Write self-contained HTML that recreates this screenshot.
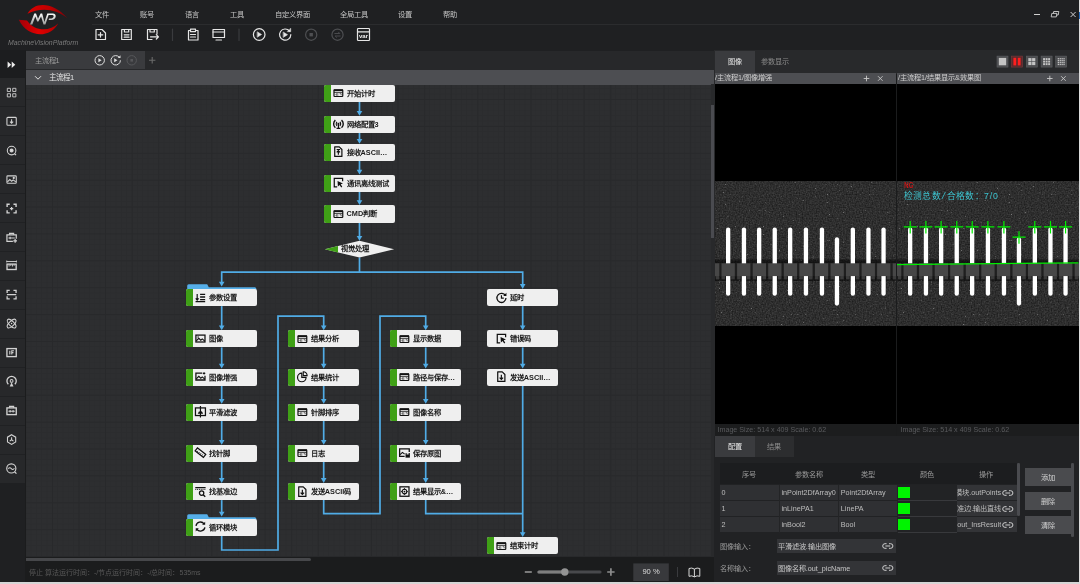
<!DOCTYPE html>
<html lang="zh-CN"><head><meta charset="utf-8"><title>MachineVisionPlatform</title>
<style>

*{box-sizing:border-box;margin:0;padding:0}
html,body{width:1080px;height:584px;overflow:hidden;background:#1f2022}
body{position:relative;font-family:"Liberation Sans", sans-serif;font-size:7.2px;color:#c8c8c8;-webkit-font-smoothing:antialiased}
#w{position:absolute;left:0;top:0;width:1080px;height:584px;overflow:hidden;will-change:transform}
.a{position:absolute}
.t{position:absolute;white-space:nowrap;line-height:10px;height:10px}
.menu{color:#c4c4c4;font-size:7.3px;top:9.5px}
svg{position:absolute;overflow:visible}
.nd{position:absolute;background:#efefef;border-radius:2px;overflow:hidden;color:#1a1a1a;font-weight:bold;font-size:7.3px;line-height:17.2px;white-space:nowrap}
.nd .g{position:absolute;left:0;top:0;bottom:0;width:7px;background:#3fa016}
.nd .ni{left:8.5px;top:3.7px;width:10.9px;height:9.1px}
.nd span{position:absolute;left:22.6px;top:0}
.cell{position:absolute;left:0;width:26px;height:29px;border-bottom:1px solid #1d1e20}
.th{position:absolute;top:466px;height:18.5px;line-height:18.5px;text-align:center;color:#9a9a9a;font-size:7.2px;width:59px}
.td{position:absolute;height:16px;line-height:15.6px;color:#bdbdbd;font-size:7.2px;white-space:nowrap;overflow:hidden;padding-left:2px}
.btn{position:absolute;left:1025.3px;width:45.9px;height:18px;background:#4a4b4e;color:#d4d4d4;text-align:center;line-height:19.6px;font-size:7.2px}

</style></head><body><div id="w">
<div class="a" style="left:0;top:0;width:1080px;height:50px;background:#1f2022"></div>
<div class="a" style="left:92px;top:23.5px;width:987px;height:1px;background:#2b2c2e"></div>
<svg style="left:0;top:0;width:92px;height:50px" viewBox="0 0 92 50">
<defs><linearGradient id="lg1" x1="0" y1="0" x2="1" y2="0"><stop offset="0" stop-color="#d80000"/><stop offset=".55" stop-color="#c00000"/><stop offset="1" stop-color="#7a0008"/></linearGradient>
<linearGradient id="lg2" x1="0" y1="0" x2="1" y2="0"><stop offset="0" stop-color="#a00008"/><stop offset=".5" stop-color="#e00000"/><stop offset="1" stop-color="#b00000"/></linearGradient>
<linearGradient id="lg3" x1="0" y1="0" x2="0" y2="1"><stop offset="0" stop-color="#fff"/><stop offset="1" stop-color="#9a9a9a"/></linearGradient></defs>
<path d="M27.5 13.8C33 2.5 52 0 67.5 18.3C55 8.2 40 7.6 27.5 13.8Z" fill="url(#lg1)"/>
<path d="M18.8 19.8C28 38.5 50.5 38.5 58.3 23.2C49.5 32 34.5 31.5 27 20.4Z" fill="url(#lg2)"/>
<path d="M30 24.6L34.3 13.5H36L38 18.8L40.6 13.5H42.2L44.4 22L47.3 13.5H52.8C57.2 13.5 56.6 20 51.2 20H48.6L49.1 18.4H51.2C54 18.4 54.4 15.1 52.4 15.1H48.6L45.4 24.6H43.5L41.1 16.4L38.4 21.5H37.2L35.3 16.6L32.3 24.6Z" fill="url(#lg3)"/>
</svg>
<div class="t" style="left:8px;top:37.5px;font-size:6.9px;font-style:italic;color:#7a7a7a">MachineVisionPlatform</div>
<div class="t menu" style="left:95px">文件</div>
<div class="t menu" style="left:140px">账号</div>
<div class="t menu" style="left:185px">语言</div>
<div class="t menu" style="left:230px">工具</div>
<div class="t menu" style="left:275px">自定义界面</div>
<div class="t menu" style="left:340px">全局工具</div>
<div class="t menu" style="left:398px">设置</div>
<div class="t menu" style="left:443px">帮助</div>
<svg style="left:1030px;top:8px;width:50px;height:13px" viewBox="1030 8 50 13" fill="none" stroke="#d0d0d0" stroke-width="1">
<path d="M1034 14.5h6"/><path d="M1051.8 13.4h5.1l-.6 3.5h-5.1z" stroke-width=".9"/><path d="M1053.4 13.4l.3-1.9h5.1l-.6 3.5h-1.5" stroke-width=".9"/><path d="M1070.6 12l5 5M1075.6 12l-5 5"/></svg>
<svg style="left:90px;top:26px;width:290px;height:18px" viewBox="90 26 290 18" fill="none" stroke="#e6e6e6" stroke-width="1.2" stroke-linejoin="round" stroke-linecap="round">
<path d="M96 29.5h6l3.5 3.5v6.5h-9.5z"/><path d="M100.5 32.5v4.6M98.2 34.8h4.6"/>
<path d="M121.7 29.5h9.6v10h-9.6z"/><path d="M124.4 29.7v2.3h4.3v-2.3M124.2 34.8h4.8M124.2 37.2h4.8"/>
<path d="M152 39.5h-4.5v-10h9.5v4.5"/><path d="M150 29.7v2.3h4.3v-2.3"/><path d="M150.5 36.8h7.8M156.3 34.6l2.2 2.2-2.2 2.2"/>
<path d="M172.5 29v11.5" stroke="#3a3b3e"/>
<path d="M190.5 30.5h-2v9.5h9.5v-9.5h-2"/><path d="M190.5 29.2h5v2.4h-5z"/><path d="M190.5 34.5h5M190.5 37h5"/>
<path d="M213 29.5h11.5v8h-11.5z"/><path d="M213 32h11.5M216 40h5.5"/>
<path d="M239 29v11.5" stroke="#3a3b3e"/>
<circle cx="259.2" cy="34.5" r="5.8"/><path d="M257.5 32l4 2.5-4 2.5z" fill="#e6e6e6" stroke-width=".6"/>
<path d="M289.5 31a5.6 5.6 0 1 0 1.3 3.7"/><path d="M290.7 28.5v3.2h-3.2z" fill="#e6e6e6" stroke-width=".5"/><path d="M283.5 32.2l4 2.5-4 2.5z" fill="#e6e6e6" stroke-width=".6"/>
<circle cx="311.2" cy="34.7" r="5.6" stroke="#4e4f52"/><rect x="309.5" y="33" width="3.4" height="3.4" fill="#4e4f52" stroke="none"/>
<circle cx="337.5" cy="34.7" r="5.6" stroke="#4e4f52"/><path d="M334.8 33.5h5l-1.3-1.3M340.2 36h-5l1.3 1.3" stroke="#4e4f52" stroke-width=".9"/>
<rect x="357.5" y="28.5" width="12" height="12" rx=".8"/><path d="M357.5 31.8h12"/>
</svg>
<div class="t" style="left:358.5px;top:32.2px;width:10px;text-align:center;font-size:6px;font-weight:bold;color:#f0f0f0;line-height:8px;height:8px">var</div>
<div class="a" style="left:0;top:78px;width:26px;height:404.5px;background:#27282a"></div>
<div class="a" style="left:0;top:50px;width:26px;height:28px;background:#1c1d1f"></div>
<svg style="left:7.4px;top:60.6px;width:9px;height:7.4px" viewBox="0 0 9 7.4"><path d="M.6 .5l3.6 3.2-3.6 3.2zM4.7 .5l3.6 3.2-3.6 3.2z" fill="#ececec"/></svg>
<div class="a" style="left:0;top:106px;width:26px;height:1px;background:#202123"></div>
<svg style="left:5.9px;top:86.9px;width:11.2px;height:11.2px" viewBox="0 0 12 12" fill="none" stroke="#d2d2d2" stroke-width="1.15"><path d="M1.4 1.4h3.4v3.4H1.4zM7.2 1.4h3.4v3.4H7.2zM1.4 7.2h3.4v3.4H1.4zM7.2 7.2h3.4v3.4H7.2z" stroke-width=".95"/></svg>
<div class="a" style="left:0;top:135px;width:26px;height:1px;background:#202123"></div>
<svg style="left:5.9px;top:115.82px;width:11.2px;height:11.2px" viewBox="0 0 12 12" fill="none" stroke="#d2d2d2" stroke-width="1.15"><rect x="1" y="1.5" width="10" height="8.5" rx="1"/><path d="M6 3.5v4M4.3 6L6 7.7 7.7 6" /></svg>
<div class="a" style="left:0;top:164px;width:26px;height:1px;background:#202123"></div>
<svg style="left:5.9px;top:144.74px;width:11.2px;height:11.2px" viewBox="0 0 12 12" fill="none" stroke="#d2d2d2" stroke-width="1.15"><circle cx="6" cy="6" r="4.6"/><circle cx="6" cy="6" r="1.6" fill="#ddd"/><path d="M9.2 9.4l1.6 1.4"/></svg>
<div class="a" style="left:0;top:193px;width:26px;height:1px;background:#202123"></div>
<svg style="left:5.9px;top:173.66px;width:11.2px;height:11.2px" viewBox="0 0 12 12" fill="none" stroke="#d2d2d2" stroke-width="1.15"><rect x="1" y="2" width="10" height="8" rx=".8"/><path d="M1.5 8.5l2.6-2.6 2 1.8 1.6-1.4 2.8 2.2"/><circle cx="8.3" cy="4.2" r=".6" fill="#ddd"/></svg>
<div class="a" style="left:0;top:222px;width:26px;height:1px;background:#202123"></div>
<svg style="left:5.9px;top:202.58px;width:11.2px;height:11.2px" viewBox="0 0 12 12" fill="none" stroke="#d2d2d2" stroke-width="1.15"><path d="M1.2 4.2V1.4h2.8M8 1.4h2.8v2.8M10.8 7.8v2.8H8M4 10.6H1.2V7.8" stroke-width="1.5"/><path d="M6 4.2v3.6M4.2 6h3.6" stroke-width="1.3"/></svg>
<div class="a" style="left:0;top:251px;width:26px;height:1px;background:#202123"></div>
<svg style="left:5.9px;top:231.5px;width:11.2px;height:11.2px" viewBox="0 0 12 12" fill="none" stroke="#d2d2d2" stroke-width="1.15"><path d="M7.4 10H1V3h10v4.2" stroke-width="1.3"/><path d="M3.8 3V1.5h4.4V3M2.6 6.5h6.8M4.4 5.2v2.6" stroke-width="1.2"/><path d="M9.8 7.6v4M7.8 9.6h4" stroke-width="1.3"/></svg>
<div class="a" style="left:0;top:280px;width:26px;height:1px;background:#202123"></div>
<svg style="left:5.9px;top:260.42px;width:11.2px;height:11.2px" viewBox="0 0 12 12" fill="none" stroke="#d2d2d2" stroke-width="1.15"><path d="M.8 1.6h10.4M.8 .6v2M11.2 .6v2" stroke-width="1"/><rect x="1.1" y="4.4" width="9.8" height="5.8" stroke-width="1.45"/><path d="M3.3 4.6v2.4M5.1 4.6v1.7M6.9 4.6v2.4M8.7 4.6v1.7" stroke-width="1"/></svg>
<div class="a" style="left:0;top:309px;width:26px;height:1px;background:#202123"></div>
<svg style="left:5.9px;top:289.34px;width:11.2px;height:11.2px" viewBox="0 0 12 12" fill="none" stroke="#d2d2d2" stroke-width="1.15"><path d="M1.2 4.2V1.5h2.8M8 1.5h2.8v2.7M10.8 7.8v2.7H8M4 10.5H1.2V7.8M1 6h10" stroke-width="1.4"/></svg>
<div class="a" style="left:0;top:338px;width:26px;height:1px;background:#202123"></div>
<svg style="left:5.9px;top:318.26px;width:11.2px;height:11.2px" viewBox="0 0 12 12" fill="none" stroke="#d2d2d2" stroke-width="1.15"><ellipse cx="6" cy="6" rx="6" ry="2.6" transform="rotate(45 6 6)" stroke-width="1.1"/><ellipse cx="6" cy="6" rx="6" ry="2.6" transform="rotate(-45 6 6)" stroke-width="1.1"/><circle cx="6" cy="6" r=".8" fill="#ddd" stroke="none"/></svg>
<div class="a" style="left:0;top:367px;width:26px;height:1px;background:#202123"></div>
<svg style="left:5.9px;top:347.18px;width:11.2px;height:11.2px" viewBox="0 0 12 12" fill="none" stroke="#d2d2d2" stroke-width="1.15"><rect x="1" y="1.7" width="10" height="8.6" stroke-width="1.45"/><path d="M4.1 4v4M6.2 8V4h2.3M6.2 6h1.8" stroke-width="1.2"/></svg>
<div class="a" style="left:0;top:396px;width:26px;height:1px;background:#202123"></div>
<svg style="left:5.9px;top:376.1px;width:11.2px;height:11.2px" viewBox="0 0 12 12" fill="none" stroke="#d2d2d2" stroke-width="1.15"><path d="M2.5 8.9a5 5 0 1 1 7 0" stroke-width="1.4"/><circle cx="6" cy="5.3" r="1.5" stroke-width="1.1"/><path d="M6 6.6l2 4.6H4z" fill="#d2d2d2" stroke="none"/></svg>
<div class="a" style="left:0;top:425px;width:26px;height:1px;background:#202123"></div>
<svg style="left:5.9px;top:405.02px;width:11.2px;height:11.2px" viewBox="0 0 12 12" fill="none" stroke="#d2d2d2" stroke-width="1.15"><rect x="1" y="3.1" width="10" height="7.2" stroke-width="1.45"/><path d="M3.8 3V1.5h4.4V3" stroke-width="1.2"/><path d="M2.6 6.7h6.8M4.4 5.3v2.8M7.6 5.3v2.8" stroke-width="1.1"/></svg>
<div class="a" style="left:0;top:454px;width:26px;height:1px;background:#202123"></div>
<svg style="left:5.9px;top:433.94px;width:11.2px;height:11.2px" viewBox="0 0 12 12" fill="none" stroke="#d2d2d2" stroke-width="1.15"><path d="M6 .8l4.4 2.6v5.2L6 11.2 1.6 8.6V3.4z"/><path d="M6 3.6v2.6l-2 1.4M6 6.2l2 1.4"/></svg>
<svg style="left:5.9px;top:462.86px;width:11.2px;height:11.2px" viewBox="0 0 12 12" fill="none" stroke="#d2d2d2" stroke-width="1.15"><circle cx="5.7" cy="5.8" r="4.9" stroke-width="1.25"/><path d="M9.2 9.4l2 2" stroke-width="1.3"/><path d="M2.4 6.2q1.6-2.2 3.3-.2t3.3-.4" stroke-width="1.1"/></svg>
<div class="a" style="left:25.2px;top:50px;width:.8px;height:532px;background:#1b1c1d"></div>
<div class="a" style="left:26px;top:50.5px;width:688px;height:19.5px;background:#27282a"></div>
<div class="a" style="left:26px;top:51px;width:119px;height:18.3px;background:#3a3b3e"></div>
<div class="t" style="left:34.5px;top:55.5px;color:#9c9c9c;font-size:7.3px">主流程1</div>
<svg style="left:90px;top:52px;width:70px;height:17px" viewBox="90 52 70 17" fill="none" stroke="#e0e0e0" stroke-width="1">
<circle cx="99.7" cy="60.3" r="4.7"/><path d="M98.4 58.3l3.2 2-3.2 2z" fill="#e0e0e0" stroke="none"/>
<path d="M119.4 57.4a4.7 4.7 0 1 0 1 2.9"/><path d="M120.5 55.3v2.7h-2.7z" fill="#e0e0e0" stroke="none"/><path d="M114.2 58.3l3.2 2-3.2 2z" fill="#e0e0e0" stroke="none"/>
<circle cx="131.7" cy="60.3" r="4.7" stroke="#56575a"/><rect x="130.4" y="59" width="2.6" height="2.6" fill="#56575a" stroke="none"/>
<path d="M149 60.3h6.4M152.2 57.1v6.4" stroke="#6a6a6a" stroke-width="1.1"/>
</svg>
<div class="a" style="left:26px;top:70px;width:688px;height:14.6px;background:#4d4e52"></div>
<svg style="left:34px;top:74.6px;width:8px;height:6px" viewBox="0 0 8 6" fill="none" stroke="#e0e0e0" stroke-width="1"><path d="M1 1.2l3 3 3-3"/></svg>
<div class="t" style="left:49px;top:72.6px;color:#e4e4e4;font-size:7.5px">主流程1</div>
<div class="a" style="left:26px;top:84.5px;width:684.5px;height:472.5px;background-color:#2d2e30;
background-image:linear-gradient(#28292b .8px,transparent .8px),linear-gradient(90deg,#28292b .8px,transparent .8px),linear-gradient(#2b2c2e .7px,transparent .7px),linear-gradient(90deg,#2b2c2e .7px,transparent .7px);
background-size:26.6px 26.9px,26.6px 26.9px,5.32px 5.38px,5.32px 5.38px;background-position:-.7px 14px,-.7px 14px,-.7px 14px,-.7px 14px"></div>
<div class="a" style="left:710.5px;top:84px;width:3.5px;height:473px;background:#28292b"></div>
<div class="a" style="left:710.5px;top:104.5px;width:3.5px;height:133.5px;background:#4a4b50"></div>
<div class="a" style="left:26px;top:557px;width:688px;height:4px;background:#1b1c1d"></div>
<div class="a" style="left:26px;top:557.7px;width:285px;height:3.1px;background:#46474a;border-radius:0 2px 2px 0"></div>
<svg style="left:0;top:0;width:1080px;height:584px" viewBox="0 0 1080 584" fill="none" stroke="#50ace6" stroke-width="1.7">
<path d="M359.5 102V112.8"/><path d="M359.5 115.8l-2.8 -4.8h5.6z" fill="#50ace6" stroke="none"/><path d="M359.5 133V140.7"/><path d="M359.5 143.7l-2.8 -4.8h5.6z" fill="#50ace6" stroke="none"/><path d="M359.5 161V171.5"/><path d="M359.5 174.5l-2.8 -4.8h5.6z" fill="#50ace6" stroke="none"/><path d="M359.5 191.7V202"/><path d="M359.5 205l-2.8 -4.8h5.6z" fill="#50ace6" stroke="none"/><path d="M359.5 222.2V237.8"/><path d="M359.5 240.8l-2.8 -4.8h5.6z" fill="#50ace6" stroke="none"/><path d="M359.5 257.5V272.2"/><path d="M221.7 283V272.2H522.7V286"/><path d="M221.7 286.6l-2.8 -4.8h5.6z" fill="#50ace6" stroke="none"/><path d="M522.7 288.9l-2.8 -4.8h5.6z" fill="#50ace6" stroke="none"/><path d="M221.7 306.1V327.2"/><path d="M221.7 330.2l-2.8 -4.8h5.6z" fill="#50ace6" stroke="none"/><path d="M221.7 347.4V365.5"/><path d="M221.7 368.5l-2.8 -4.8h5.6z" fill="#50ace6" stroke="none"/><path d="M221.7 385.7V400.8"/><path d="M221.7 403.8l-2.8 -4.8h5.6z" fill="#50ace6" stroke="none"/><path d="M221.7 421V441.8"/><path d="M221.7 444.8l-2.8 -4.8h5.6z" fill="#50ace6" stroke="none"/><path d="M221.7 462V479.9"/><path d="M221.7 482.9l-2.8 -4.8h5.6z" fill="#50ace6" stroke="none"/><path d="M221.7 500.1V513.5"/><path d="M221.7 516.5l-2.8 -4.8h5.6z" fill="#50ace6" stroke="none"/><path d="M323.7 347.4V365.5"/><path d="M323.7 368.5l-2.8 -4.8h5.6z" fill="#50ace6" stroke="none"/><path d="M323.7 385.7V400.8"/><path d="M323.7 403.8l-2.8 -4.8h5.6z" fill="#50ace6" stroke="none"/><path d="M323.7 421V441.8"/><path d="M323.7 444.8l-2.8 -4.8h5.6z" fill="#50ace6" stroke="none"/><path d="M323.7 462V479.9"/><path d="M323.7 482.9l-2.8 -4.8h5.6z" fill="#50ace6" stroke="none"/><path d="M425.7 347.4V365.5"/><path d="M425.7 368.5l-2.8 -4.8h5.6z" fill="#50ace6" stroke="none"/><path d="M425.7 385.7V400.8"/><path d="M425.7 403.8l-2.8 -4.8h5.6z" fill="#50ace6" stroke="none"/><path d="M425.7 421V441.8"/><path d="M425.7 444.8l-2.8 -4.8h5.6z" fill="#50ace6" stroke="none"/><path d="M425.7 462V479.9"/><path d="M425.7 482.9l-2.8 -4.8h5.6z" fill="#50ace6" stroke="none"/><path d="M221.7 536V550H278V316.2H323.7V327"/><path d="M323.7 330.2l-2.8 -4.8h5.6z" fill="#50ace6" stroke="none"/><path d="M323.7 500V513.7H380V316.2H425.7V327"/><path d="M425.7 330.2l-2.8 -4.8h5.6z" fill="#50ace6" stroke="none"/><path d="M425.7 500V513.7H522.7"/><path d="M522.7 306.1V327.2"/><path d="M522.7 330.2l-2.8 -4.8h5.6z" fill="#50ace6" stroke="none"/><path d="M522.7 347.4V365.5"/><path d="M522.7 368.5l-2.8 -4.8h5.6z" fill="#50ace6" stroke="none"/><path d="M522.7 385.5V534"/><path d="M522.7 537l-2.8 -4.8h5.6z" fill="#50ace6" stroke="none"/>
<path d="M324.9 249.2L359.5 240.8L394.1 249.2L359.5 257.6Z" fill="#efefef" stroke="none"/>
<path d="M324.9 249.2L338 246L338 252.4Z" fill="#3fa016" stroke="none"/>
<path d="M187.2 290v-4.2q0 -1.5 1.5 -1.5h18.5l1.6 3h46q1.5 0 1.5 1.5v1.2z" fill="#55aee8" stroke="none"/>
<path d="M187.2 520v-4.2q0 -1.5 1.5 -1.5h18.5l1.6 3h46q1.5 0 1.5 1.5v1.2z" fill="#55aee8" stroke="none"/>
</svg>
<div class="t" style="left:330.2px;top:244.2px;width:50px;text-align:center;color:#1a1a1a;font-weight:bold;font-size:7.3px">视觉处理</div>
<div class="nd" style="left:324px;top:84.8px;width:71px;height:17.2px"><i class="g"></i><svg class="ni" viewBox="0 0 12 10"><g transform="translate(0 .15)"><rect x="1.1" y="2.3" width="9.65" height="6.9" rx=".7" fill="none" stroke="#111" stroke-width="1.35"/><path d="M.8 2.2h10.3" stroke="#111" stroke-width="1.7"/><path d="M1.1 4.6h9.65" stroke="#111" stroke-width=".95"/><path d="M5.9 6.3H3.3v1.4H5.9M7.3 6.1h1.7v1.8" stroke="#222" stroke-width=".7" fill="none"/></g></svg><span>开始计时</span></div>
<div class="nd" style="left:324px;top:115.8px;width:71px;height:17.2px"><i class="g"></i><svg class="ni" viewBox="0 0 12 10"><g transform="translate(0 .6)"><path d="M2.6 .6a5.6 5.6 0 0 0 0 8.4M9.4 .6a5.6 5.6 0 0 1 0 8.4" stroke="#111" stroke-width="1.55" fill="none"/><path d="M4.5 2.6a3 3 0 0 0 0 4.4M7.5 2.6a3 3 0 0 1 0 4.4" stroke="#111" stroke-width="1.2" fill="none"/><circle cx="6" cy="4.8" r="1.2" fill="#111"/><path d="M6 5.5v3.8M3.9 9.6h4.2" stroke="#111" stroke-width="1.4" fill="none"/></g></svg><span>网络配置3</span></div>
<div class="nd" style="left:324px;top:143.7px;width:71px;height:17.2px"><i class="g"></i><svg class="ni" viewBox="0 0 12 10"><path d="M1.9 -.2h5l2.9 2.9v7.7H1.9z" fill="none" stroke="#111" stroke-width="1.35" stroke-linejoin="round"/><path d="M5.9 8.4V4.3M4.1 5.9l1.8-1.9 1.8 1.9M4 2.7h3.8" stroke="#111" stroke-width="1.25" fill="none"/></svg><span>接收ASCII…</span></div>
<div class="nd" style="left:324px;top:174.5px;width:71px;height:17.2px"><i class="g"></i><svg class="ni" viewBox="0 0 12 10"><path d="M10.6 3.6V.4H1.4v9.4h3.2" fill="none" stroke="#111" stroke-width="1.35"/><path d="M5 3.4l6 2.7-2.5.8 1.7 2.7-1.2.8-1.7-2.7-1.9 1.7z" fill="#111"/></svg><span>通讯离线测试</span></div>
<div class="nd" style="left:324px;top:205.4px;width:71px;height:17.2px"><i class="g"></i><svg class="ni" viewBox="0 0 12 10"><g transform="translate(0 .15)"><rect x="1.1" y="2.3" width="9.65" height="6.9" rx=".7" fill="none" stroke="#111" stroke-width="1.35"/><path d="M.8 2.2h10.3" stroke="#111" stroke-width="1.7"/><path d="M1.1 4.6h9.65" stroke="#111" stroke-width=".95"/><path d="M5.9 6.3H3.3v1.4H5.9M7.3 6.1h1.7v1.8" stroke="#222" stroke-width=".7" fill="none"/></g></svg><span>CMD判断</span></div>
<div class="nd" style="left:186.2px;top:288.9px;width:71px;height:17.2px"><i class="g"></i><svg class="ni" viewBox="0 0 12 10"><path d="M2.4 1v6.6M.8 6l1.6 1.8L4 6" stroke="#111" stroke-width="1.3" fill="none"/><path d="M5.6 1.6h5.6M5.6 4.4h5.6M5.6 7.2h5.6M.6 9.4h10.6" stroke="#111" stroke-width="1.4" fill="none"/></svg><span>参数设置</span></div>
<div class="nd" style="left:186.2px;top:330.2px;width:71px;height:17.2px"><i class="g"></i><svg class="ni" viewBox="0 0 12 10"><rect x="1" y="1.2" width="10" height="7.6" fill="none" stroke="#111" stroke-width="1.4"/><path d="M1.4 7.6l2.8-2.8 2.2 2 1.6-1.4 2.8 2.4" stroke="#111" stroke-width="1.3" fill="none"/><circle cx="3.4" cy="3.4" r=".8" fill="#111"/></svg><span>图像</span></div>
<div class="nd" style="left:186.2px;top:368.5px;width:71px;height:17.2px"><i class="g"></i><svg class="ni" viewBox="0 0 12 10"><path d="M8 1.2H1v7.6h10V4" fill="none" stroke="#111" stroke-width="1.4"/><path d="M1.4 7.6l2.8-2.8 2.2 2 1.6-1.4 2.8 2.4" stroke="#111" stroke-width="1.3" fill="none"/><path d="M10 .2v2.6M8.7 1.5h2.6" stroke="#111" stroke-width="1.15"/></svg><span>图像增强</span></div>
<div class="nd" style="left:186.2px;top:403.8px;width:71px;height:17.2px"><i class="g"></i><svg class="ni" viewBox="0 0 12 10"><rect x=".5" y="1" width="11" height="8.4" fill="none" stroke="#111" stroke-width="1.4"/><path d="M6 -1v12.6" stroke="#111" stroke-width="1.3"/><path d="M3 7.4l1.6-3 1.4 1.8 1.4-1.8 1.6 3z" fill="#111"/></svg><span>平滑滤波</span></div>
<div class="nd" style="left:186.2px;top:444.8px;width:71px;height:17.2px"><i class="g"></i><svg class="ni" viewBox="0 0 12 10"><g transform="rotate(38 6 5)"><rect x=".2" y="2.9" width="11.6" height="4.2" fill="none" stroke="#111" stroke-width="1.35"/><path d="M2.6 5.2v1.9M4.8 5.2v1.9M7 5.2v1.9M9.2 5.2v1.9" stroke="#111" stroke-width=".9"/></g></svg><span>找针脚</span></div>
<div class="nd" style="left:186.2px;top:482.9px;width:71px;height:17.2px"><i class="g"></i><svg class="ni" viewBox="0 0 12 10"><path d="M.3 .6h11.4" stroke="#111" stroke-width="1.3"/><path d="M.3 2.6h11.4" stroke="#111" stroke-width="1.1" stroke-dasharray="1.1 .9"/><circle cx="7.3" cy="6.7" r="2.4" fill="#efefef" stroke="#111" stroke-width="1.4"/><path d="M9 8.5l2.3 2.3" stroke="#111" stroke-width="1.5"/></svg><span>找基准边</span></div>
<div class="nd" style="left:186.2px;top:518.8px;width:71px;height:17.2px"><i class="g"></i><svg class="ni" viewBox="0 0 12 10"><path d="M1.1 4.2A5 5 0 0 1 10 2M10.9 5.8A5 5 0 0 1 2 8" fill="none" stroke="#111" stroke-width="1.5"/><path d="M11.2 -.4v3.4H7.8zM.8 10.4V7H4.2z" fill="#111"/></svg><span>循环模块</span></div>
<div class="nd" style="left:288.2px;top:330.2px;width:71px;height:17.2px"><i class="g"></i><svg class="ni" viewBox="0 0 12 10"><g transform="translate(0 .15)"><rect x="1.1" y="2.3" width="9.65" height="6.9" rx=".7" fill="none" stroke="#111" stroke-width="1.35"/><path d="M.8 2.2h10.3" stroke="#111" stroke-width="1.7"/><path d="M1.1 4.6h9.65" stroke="#111" stroke-width=".95"/><path d="M5.9 6.3H3.3v1.4H5.9M7.3 6.1h1.7v1.8" stroke="#222" stroke-width=".7" fill="none"/></g></svg><span>结果分析</span></div>
<div class="nd" style="left:288.2px;top:368.5px;width:71px;height:17.2px"><i class="g"></i><svg class="ni" viewBox="0 0 12 10"><path d="M5.3 1.3A4.7 4.7 0 1 0 10 6H5.3z" fill="none" stroke="#111" stroke-width="1.3"/><path d="M6.9 -.3a4.3 4.3 0 0 1 4.3 4.3H6.9z" fill="none" stroke="#111" stroke-width="1.2"/></svg><span>结果统计</span></div>
<div class="nd" style="left:288.2px;top:403.8px;width:71px;height:17.2px"><i class="g"></i><svg class="ni" viewBox="0 0 12 10"><g transform="translate(0 .15)"><rect x="1.1" y="2.3" width="9.65" height="6.9" rx=".7" fill="none" stroke="#111" stroke-width="1.35"/><path d="M.8 2.2h10.3" stroke="#111" stroke-width="1.7"/><path d="M1.1 4.6h9.65" stroke="#111" stroke-width=".95"/><path d="M5.9 6.3H3.3v1.4H5.9M7.3 6.1h1.7v1.8" stroke="#222" stroke-width=".7" fill="none"/></g></svg><span>针脚排序</span></div>
<div class="nd" style="left:288.2px;top:444.8px;width:71px;height:17.2px"><i class="g"></i><svg class="ni" viewBox="0 0 12 10"><g transform="translate(0 .15)"><rect x="1.1" y="2.3" width="9.65" height="6.9" rx=".7" fill="none" stroke="#111" stroke-width="1.35"/><path d="M.8 2.2h10.3" stroke="#111" stroke-width="1.7"/><path d="M1.1 4.6h9.65" stroke="#111" stroke-width=".95"/><path d="M5.9 6.3H3.3v1.4H5.9M7.3 6.1h1.7v1.8" stroke="#222" stroke-width=".7" fill="none"/></g></svg><span>日志</span></div>
<div class="nd" style="left:288.2px;top:482.9px;width:71px;height:17.2px"><i class="g"></i><svg class="ni" viewBox="0 0 12 10"><path d="M1.9 -.2h5l2.9 2.9v7.7H1.9z" fill="none" stroke="#111" stroke-width="1.35" stroke-linejoin="round"/><path d="M5.9 3v5M4 6.2l1.9 2 1.9-2" stroke="#111" stroke-width="1.3" fill="none"/></svg><span>发送ASCII码</span></div>
<div class="nd" style="left:390.2px;top:330.2px;width:71px;height:17.2px"><i class="g"></i><svg class="ni" viewBox="0 0 12 10"><g transform="translate(0 .15)"><rect x="1.1" y="2.3" width="9.65" height="6.9" rx=".7" fill="none" stroke="#111" stroke-width="1.35"/><path d="M.8 2.2h10.3" stroke="#111" stroke-width="1.7"/><path d="M1.1 4.6h9.65" stroke="#111" stroke-width=".95"/><path d="M5.9 6.3H3.3v1.4H5.9M7.3 6.1h1.7v1.8" stroke="#222" stroke-width=".7" fill="none"/></g></svg><span>显示数据</span></div>
<div class="nd" style="left:390.2px;top:368.5px;width:71px;height:17.2px"><i class="g"></i><svg class="ni" viewBox="0 0 12 10"><g transform="translate(0 .15)"><rect x="1.1" y="2.3" width="9.65" height="6.9" rx=".7" fill="none" stroke="#111" stroke-width="1.35"/><path d="M.8 2.2h10.3" stroke="#111" stroke-width="1.7"/><path d="M1.1 4.6h9.65" stroke="#111" stroke-width=".95"/><path d="M5.9 6.3H3.3v1.4H5.9M7.3 6.1h1.7v1.8" stroke="#222" stroke-width=".7" fill="none"/></g></svg><span>路径与保存…</span></div>
<div class="nd" style="left:390.2px;top:403.8px;width:71px;height:17.2px"><i class="g"></i><svg class="ni" viewBox="0 0 12 10"><g transform="translate(0 .15)"><rect x="1.1" y="2.3" width="9.65" height="6.9" rx=".7" fill="none" stroke="#111" stroke-width="1.35"/><path d="M.8 2.2h10.3" stroke="#111" stroke-width="1.7"/><path d="M1.1 4.6h9.65" stroke="#111" stroke-width=".95"/><path d="M5.9 6.3H3.3v1.4H5.9M7.3 6.1h1.7v1.8" stroke="#222" stroke-width=".7" fill="none"/></g></svg><span>图像名称</span></div>
<div class="nd" style="left:390.2px;top:444.8px;width:71px;height:17.2px"><i class="g"></i><svg class="ni" viewBox="0 0 12 10"><path d="M6.2 9.3H.7V.9h10.6V4.4" fill="none" stroke="#111" stroke-width="1.4"/><path d="M1.2 7.4l2.6-2.6 2.4 2" stroke="#111" stroke-width="1.2" fill="none"/><rect x="7.2" y="5.6" width="4.8" height="5" fill="#111"/><rect x="8.4" y="5.6" width="2.2" height="1.5" fill="#efefef"/></svg><span>保存原图</span></div>
<div class="nd" style="left:390.2px;top:482.9px;width:71px;height:17.2px"><i class="g"></i><svg class="ni" viewBox="0 0 12 10"><rect x="1" y="-.2" width="10" height="10.4" fill="none" stroke="#111" stroke-width="1.4"/><circle cx="6" cy="5" r="2.6" fill="none" stroke="#111" stroke-width="1.2"/><circle cx="6" cy="5" r="1" fill="#111"/><path d="M6 1.2v1.6M6 7.2v1.6M2.2 5h1.6M8.2 5h1.6" stroke="#111" stroke-width="1"/></svg><span>结果显示&amp;…</span></div>
<div class="nd" style="left:487.2px;top:288.9px;width:71px;height:17.2px"><svg class="ni" viewBox="0 0 12 10"><path d="M10.4 3A5 5 0 1 0 11 5.6" fill="none" stroke="#111" stroke-width="1.45"/><path d="M11.5 -.2v3.6H7.9z" fill="#111"/><path d="M6 2.6V5.6h2.6" fill="none" stroke="#111" stroke-width="1.3"/></svg><span>延时</span></div>
<div class="nd" style="left:487.2px;top:330.2px;width:71px;height:17.2px"><svg class="ni" viewBox="0 0 12 10"><path d="M10.6 3.6V.4H1.4v9.4h3.2" fill="none" stroke="#111" stroke-width="1.35"/><path d="M5 3.4l6 2.7-2.5.8 1.7 2.7-1.2.8-1.7-2.7-1.9 1.7z" fill="#111"/></svg><span>错误码</span></div>
<div class="nd" style="left:487.2px;top:368.5px;width:71px;height:17.2px"><svg class="ni" viewBox="0 0 12 10"><path d="M1.9 -.2h5l2.9 2.9v7.7H1.9z" fill="none" stroke="#111" stroke-width="1.35" stroke-linejoin="round"/><path d="M5.9 3v5M4 6.2l1.9 2 1.9-2" stroke="#111" stroke-width="1.3" fill="none"/></svg><span>发送ASCII…</span></div>
<div class="nd" style="left:487.2px;top:537px;width:71px;height:17.2px"><i class="g"></i><svg class="ni" viewBox="0 0 12 10"><g transform="translate(0 .15)"><rect x="1.1" y="2.3" width="9.65" height="6.9" rx=".7" fill="none" stroke="#111" stroke-width="1.35"/><path d="M.8 2.2h10.3" stroke="#111" stroke-width="1.7"/><path d="M1.1 4.6h9.65" stroke="#111" stroke-width=".95"/><path d="M5.9 6.3H3.3v1.4H5.9M7.3 6.1h1.7v1.8" stroke="#222" stroke-width=".7" fill="none"/></g></svg><span>结束计时</span></div>
<div class="a" style="left:26px;top:561px;width:688px;height:21px;background:#1b1c1d"></div>
<div class="t" style="left:29px;top:567.5px;color:#585858;font-size:7px">停止 算法运行时间：-/节点运行时间：-/总时间：535ms</div>
<svg style="left:520px;top:562px;width:190px;height:20px" viewBox="520 562 190 20" fill="none">
<path d="M524.8 572h7" stroke="#8c8c8c" stroke-width="1.7"/><path d="M539 572h61" stroke="#48494c" stroke-width="3.2" stroke-linecap="round"/><path d="M539 572h26" stroke="#7e7e7e" stroke-width="3.2" stroke-linecap="round"/><circle cx="564.8" cy="572" r="3.7" fill="#949494"/>
<path d="M607.2 572h7.4M610.9 568.3v7.4" stroke="#8c8c8c" stroke-width="1.7"/>
<rect x="633.3" y="563.4" width="35.5" height="17.6" fill="#38393c"/>
<path d="M677.5 567v10" stroke="#3a3b3e" stroke-width="1"/>
<path d="M689 568.5q2.8 -1.2 5.4 .6q2.6 -1.8 5.4 -.6v7.8q-2.8 -1.2 -5.4 .6q-2.6 -1.8 -5.4 -.6zM694.4 569.1v7.8" stroke="#d8d8d8" stroke-width="1"/>
</svg>
<div class="t" style="left:633.3px;top:567.2px;width:35.5px;text-align:center;color:#dedede;font-size:7.6px">90 %</div>
<div class="a" style="left:714px;top:50px;width:366px;height:532px;background:#28292b"></div>
<div class="a" style="left:714.5px;top:50.6px;width:40px;height:22.6px;background:#3a3b3e"></div>
<div class="t" style="left:714.5px;top:57px;width:40px;text-align:center;color:#e8e8e8;font-size:7.2px">图像</div>
<div class="t" style="left:761px;top:57px;color:#8a8a8a;font-size:7.2px">参数显示</div>
<svg style="left:995px;top:55px;width:75px;height:13px" viewBox="995 55 75 13">
<rect x="997" y="56.1" width="11" height="11" fill="#4b4c4f" stroke="#5e5f62" stroke-width=".6"/>
<rect x="998.8" y="57.9" width="7.4" height="7.4" fill="#c4c4c4"/>
<rect x="1011.5" y="56.1" width="11" height="11" fill="#5a2a2c" stroke="#7a3a3c" stroke-width=".6"/>
<rect x="1013.4" y="57.8" width="2.8" height="7.6" fill="#ff1e1e"/><rect x="1017.8" y="57.8" width="2.8" height="7.6" fill="#ff1e1e"/>
<rect x="1026.3" y="56.1" width="11" height="11" fill="#4b4c4f" stroke="#5e5f62" stroke-width=".6"/>
<rect x="1028.3" y="58.1" width="3.2" height="3.2" fill="#c4c4c4"/>
<rect x="1032.1" y="58.1" width="3.2" height="3.2" fill="#c4c4c4"/>
<rect x="1028.3" y="61.9" width="3.2" height="3.2" fill="#c4c4c4"/>
<rect x="1032.1" y="61.9" width="3.2" height="3.2" fill="#c4c4c4"/>
<rect x="1041.1" y="56.1" width="11" height="11" fill="#4b4c4f" stroke="#5e5f62" stroke-width=".6"/>
<rect x="1043.1" y="58.1" width="1.93" height="1.93" fill="#c4c4c4"/>
<rect x="1045.63" y="58.1" width="1.93" height="1.93" fill="#c4c4c4"/>
<rect x="1048.17" y="58.1" width="1.93" height="1.93" fill="#c4c4c4"/>
<rect x="1043.1" y="60.63" width="1.93" height="1.93" fill="#c4c4c4"/>
<rect x="1045.63" y="60.63" width="1.93" height="1.93" fill="#c4c4c4"/>
<rect x="1048.17" y="60.63" width="1.93" height="1.93" fill="#c4c4c4"/>
<rect x="1043.1" y="63.17" width="1.93" height="1.93" fill="#c4c4c4"/>
<rect x="1045.63" y="63.17" width="1.93" height="1.93" fill="#c4c4c4"/>
<rect x="1048.17" y="63.17" width="1.93" height="1.93" fill="#c4c4c4"/>
<rect x="1055.7" y="56.1" width="11" height="11" fill="#4b4c4f" stroke="#5e5f62" stroke-width=".6"/>
<rect x="1057.7" y="58.1" width="1.3" height="1.3" fill="#c4c4c4"/>
<rect x="1059.6" y="58.1" width="1.3" height="1.3" fill="#c4c4c4"/>
<rect x="1061.5" y="58.1" width="1.3" height="1.3" fill="#c4c4c4"/>
<rect x="1063.4" y="58.1" width="1.3" height="1.3" fill="#c4c4c4"/>
<rect x="1057.7" y="60" width="1.3" height="1.3" fill="#c4c4c4"/>
<rect x="1059.6" y="60" width="1.3" height="1.3" fill="#c4c4c4"/>
<rect x="1061.5" y="60" width="1.3" height="1.3" fill="#c4c4c4"/>
<rect x="1063.4" y="60" width="1.3" height="1.3" fill="#c4c4c4"/>
<rect x="1057.7" y="61.9" width="1.3" height="1.3" fill="#c4c4c4"/>
<rect x="1059.6" y="61.9" width="1.3" height="1.3" fill="#c4c4c4"/>
<rect x="1061.5" y="61.9" width="1.3" height="1.3" fill="#c4c4c4"/>
<rect x="1063.4" y="61.9" width="1.3" height="1.3" fill="#c4c4c4"/>
<rect x="1057.7" y="63.8" width="1.3" height="1.3" fill="#c4c4c4"/>
<rect x="1059.6" y="63.8" width="1.3" height="1.3" fill="#c4c4c4"/>
<rect x="1061.5" y="63.8" width="1.3" height="1.3" fill="#c4c4c4"/>
<rect x="1063.4" y="63.8" width="1.3" height="1.3" fill="#c4c4c4"/>
</svg>
<div class="a" style="left:714.5px;top:73.1px;width:181.2px;height:10.5px;background:#4d4e52"></div>
<div class="a" style="left:897.4px;top:73.1px;width:182px;height:10.5px;background:#4d4e52"></div>
<div class="t" style="left:715px;top:73.4px;color:#cfcfcf;font-size:7.2px">/主流程1/图像增强</div>
<div class="t" style="left:898px;top:73.4px;color:#cfcfcf;font-size:7.2px">/主流程1/结果显示&amp;效果图</div>
<svg style="left:860px;top:74px;width:220px;height:9px" viewBox="860 74 220 9" fill="none" stroke="#c8c8c8" stroke-width=".9"><path d="M863.7 78.5h5.6M866.5 75.7v5.6M878 76.2l4.6 4.6M882.6 76.2l-4.6 4.6M1047 78.5h5.6M1049.8 75.7v5.6M1061.1 76.2l4.6 4.6M1065.7 76.2l-4.6 4.6"/></svg>
<div class="a" style="left:895.7px;top:73.5px;width:1.7px;height:362.2px;background:#1b1c1d"></div>
<div class="a" style="left:714.5px;top:83.5px;width:181.2px;height:340px;background:#000"></div>
<div class="a" style="left:897.4px;top:83.5px;width:182px;height:340px;background:#000"></div>
<svg style="left:714.5px;top:181px;width:181.5px;height:144.7px;overflow:hidden" viewBox="0 181 181.5 144.7" preserveAspectRatio="none"><defs><filter id="nz0" x="-5%" y="-5%" width="110%" height="110%" color-interpolation-filters="sRGB"><feTurbulence type="fractalNoise" baseFrequency="0.7" numOctaves="1" seed="3" result="t"/><feColorMatrix in="t" type="matrix" values="0.24 0 0 0 0.06  0.24 0 0 0 0.06  0.24 0 0 0 0.06  0 0 0 0 1" result="g"/><feGaussianBlur in="g" stdDeviation="0.6" result="gb"/><feTurbulence type="fractalNoise" baseFrequency="0.5" numOctaves="1" seed="11" result="t2"/><feColorMatrix in="t2" type="matrix" values="0 0 0 0 .6  0 0 0 0 .6  0 0 0 0 .6  5 0 0 0 -3.55" result="sp"/><feMerge><feMergeNode in="gb"/><feMergeNode in="sp"/></feMerge></filter><filter id="bl0" x="-50%" y="-10%" width="200%" height="120%"><feGaussianBlur stdDeviation="0.5"/></filter><linearGradient id="sh0" x1="0" y1="0" x2="0" y2="1"><stop offset="0" stop-color="#000" stop-opacity="0"/><stop offset=".35" stop-color="#000" stop-opacity=".45"/><stop offset="1" stop-color="#000" stop-opacity=".62"/></linearGradient></defs><rect x="0" y="181" width="181.5" height="144.7" filter="url(#nz0)"/><rect x="0" y="258.4" width="181.5" height="5" fill="url(#sh0)"/><rect x="0" y="263.3" width="181.5" height="12.8" fill="#1f1f1f"/><rect x="0" y="276.1" width="181.5" height="4.8" fill="#000" opacity=".55"/><g fill="#3b3b3b"><rect x="-9" y="276" width="3.6" height="3.4"/><rect x="0.7" y="276" width="3.6" height="3.4"/><rect x="6.5" y="276" width="3.6" height="3.4"/><rect x="16.2" y="276" width="3.6" height="3.4"/><rect x="22.1" y="276" width="3.6" height="3.4"/><rect x="31.8" y="276" width="3.6" height="3.4"/><rect x="37.7" y="276" width="3.6" height="3.4"/><rect x="47.4" y="276" width="3.6" height="3.4"/><rect x="53.2" y="276" width="3.6" height="3.4"/><rect x="62.9" y="276" width="3.6" height="3.4"/><rect x="68.8" y="276" width="3.6" height="3.4"/><rect x="78.5" y="276" width="3.6" height="3.4"/><rect x="84.3" y="276" width="3.6" height="3.4"/><rect x="94" y="276" width="3.6" height="3.4"/><rect x="99.9" y="276" width="3.6" height="3.4"/><rect x="109.6" y="276" width="3.6" height="3.4"/><rect x="115.5" y="276" width="3.6" height="3.4"/><rect x="125.2" y="276" width="3.6" height="3.4"/><rect x="131" y="276" width="3.6" height="3.4"/><rect x="140.7" y="276" width="3.6" height="3.4"/><rect x="146.6" y="276" width="3.6" height="3.4"/><rect x="156.3" y="276" width="3.6" height="3.4"/><rect x="162.1" y="276" width="3.6" height="3.4"/><rect x="171.8" y="276" width="3.6" height="3.4"/><rect x="177.7" y="276" width="3.6" height="3.4"/><rect x="187.4" y="276" width="3.6" height="3.4"/></g><g fill="#fff" filter="url(#bl0)"><rect x="11" y="227.4" width="4.3" height="68.4" rx="2.1"/><rect x="26.8" y="227.4" width="4.3" height="68.4" rx="2.1"/><rect x="42" y="227.4" width="4.3" height="68.4" rx="2.1"/><rect x="57.6" y="227.4" width="4.3" height="68.4" rx="2.1"/><rect x="73" y="227.4" width="4.3" height="68.4" rx="2.1"/><rect x="88.8" y="227.4" width="4.3" height="68.4" rx="2.1"/><rect x="104.8" y="227.4" width="4.3" height="68.4" rx="2.1"/><rect x="119.8" y="237.3" width="4.3" height="68.4" rx="2.1"/><rect x="135.7" y="227.4" width="4.3" height="68.4" rx="2.1"/><rect x="151.3" y="227.4" width="4.3" height="68.4" rx="2.1"/><rect x="166.4" y="227.4" width="4.3" height="68.4" rx="2.1"/></g><g fill="#474747"><rect x="-9" y="263.3" width="13.3" height="12.8"/><rect x="6.5" y="263.3" width="13.3" height="12.8"/><rect x="22.1" y="263.3" width="13.3" height="12.8"/><rect x="37.7" y="263.3" width="13.3" height="12.8"/><rect x="53.2" y="263.3" width="13.3" height="12.8"/><rect x="68.8" y="263.3" width="13.3" height="12.8"/><rect x="84.3" y="263.3" width="13.3" height="12.8"/><rect x="99.9" y="263.3" width="13.3" height="12.8"/><rect x="115.5" y="263.3" width="13.3" height="12.8"/><rect x="131" y="263.3" width="13.3" height="12.8"/><rect x="146.6" y="263.3" width="13.3" height="12.8"/><rect x="162.1" y="263.3" width="13.3" height="12.8"/><rect x="177.7" y="263.3" width="13.3" height="12.8"/></g></svg>
<svg style="left:897.4px;top:181px;width:181.5px;height:144.7px;overflow:hidden" viewBox="0 181 181.5 144.7" preserveAspectRatio="none"><defs><filter id="nz1" x="-5%" y="-5%" width="110%" height="110%" color-interpolation-filters="sRGB"><feTurbulence type="fractalNoise" baseFrequency="0.7" numOctaves="1" seed="4" result="t"/><feColorMatrix in="t" type="matrix" values="0.24 0 0 0 0.06  0.24 0 0 0 0.06  0.24 0 0 0 0.06  0 0 0 0 1" result="g"/><feGaussianBlur in="g" stdDeviation="0.6" result="gb"/><feTurbulence type="fractalNoise" baseFrequency="0.5" numOctaves="1" seed="11" result="t2"/><feColorMatrix in="t2" type="matrix" values="0 0 0 0 .6  0 0 0 0 .6  0 0 0 0 .6  5 0 0 0 -3.55" result="sp"/><feMerge><feMergeNode in="gb"/><feMergeNode in="sp"/></feMerge></filter><filter id="bl1" x="-50%" y="-10%" width="200%" height="120%"><feGaussianBlur stdDeviation="0.5"/></filter><linearGradient id="sh1" x1="0" y1="0" x2="0" y2="1"><stop offset="0" stop-color="#000" stop-opacity="0"/><stop offset=".35" stop-color="#000" stop-opacity=".45"/><stop offset="1" stop-color="#000" stop-opacity=".62"/></linearGradient></defs><rect x="0" y="181" width="181.5" height="144.7" filter="url(#nz1)"/><rect x="0" y="258.4" width="181.5" height="5" fill="url(#sh1)"/><rect x="0" y="263.3" width="181.5" height="12.8" fill="#1f1f1f"/><rect x="0" y="276.1" width="181.5" height="4.8" fill="#000" opacity=".55"/><g fill="#3b3b3b"><rect x="-9" y="276" width="3.6" height="3.4"/><rect x="0.7" y="276" width="3.6" height="3.4"/><rect x="6.5" y="276" width="3.6" height="3.4"/><rect x="16.2" y="276" width="3.6" height="3.4"/><rect x="22.1" y="276" width="3.6" height="3.4"/><rect x="31.8" y="276" width="3.6" height="3.4"/><rect x="37.7" y="276" width="3.6" height="3.4"/><rect x="47.4" y="276" width="3.6" height="3.4"/><rect x="53.2" y="276" width="3.6" height="3.4"/><rect x="62.9" y="276" width="3.6" height="3.4"/><rect x="68.8" y="276" width="3.6" height="3.4"/><rect x="78.5" y="276" width="3.6" height="3.4"/><rect x="84.3" y="276" width="3.6" height="3.4"/><rect x="94" y="276" width="3.6" height="3.4"/><rect x="99.9" y="276" width="3.6" height="3.4"/><rect x="109.6" y="276" width="3.6" height="3.4"/><rect x="115.5" y="276" width="3.6" height="3.4"/><rect x="125.2" y="276" width="3.6" height="3.4"/><rect x="131" y="276" width="3.6" height="3.4"/><rect x="140.7" y="276" width="3.6" height="3.4"/><rect x="146.6" y="276" width="3.6" height="3.4"/><rect x="156.3" y="276" width="3.6" height="3.4"/><rect x="162.1" y="276" width="3.6" height="3.4"/><rect x="171.8" y="276" width="3.6" height="3.4"/><rect x="177.7" y="276" width="3.6" height="3.4"/><rect x="187.4" y="276" width="3.6" height="3.4"/></g><g fill="#fff" filter="url(#bl1)"><rect x="11" y="227.4" width="4.3" height="68.4" rx="2.1"/><rect x="26.8" y="227.4" width="4.3" height="68.4" rx="2.1"/><rect x="42" y="227.4" width="4.3" height="68.4" rx="2.1"/><rect x="57.6" y="227.4" width="4.3" height="68.4" rx="2.1"/><rect x="73" y="227.4" width="4.3" height="68.4" rx="2.1"/><rect x="88.8" y="227.4" width="4.3" height="68.4" rx="2.1"/><rect x="104.8" y="227.4" width="4.3" height="68.4" rx="2.1"/><rect x="119.8" y="237.3" width="4.3" height="68.4" rx="2.1"/><rect x="135.7" y="227.4" width="4.3" height="68.4" rx="2.1"/><rect x="151.3" y="227.4" width="4.3" height="68.4" rx="2.1"/><rect x="166.4" y="227.4" width="4.3" height="68.4" rx="2.1"/></g><g fill="#474747"><rect x="-9" y="263.3" width="13.3" height="12.8"/><rect x="6.5" y="263.3" width="13.3" height="12.8"/><rect x="22.1" y="263.3" width="13.3" height="12.8"/><rect x="37.7" y="263.3" width="13.3" height="12.8"/><rect x="53.2" y="263.3" width="13.3" height="12.8"/><rect x="68.8" y="263.3" width="13.3" height="12.8"/><rect x="84.3" y="263.3" width="13.3" height="12.8"/><rect x="99.9" y="263.3" width="13.3" height="12.8"/><rect x="115.5" y="263.3" width="13.3" height="12.8"/><rect x="131" y="263.3" width="13.3" height="12.8"/><rect x="146.6" y="263.3" width="13.3" height="12.8"/><rect x="162.1" y="263.3" width="13.3" height="12.8"/><rect x="177.7" y="263.3" width="13.3" height="12.8"/></g><g stroke="#00ee00" stroke-width="1.2" fill="none"><path d="M0 264.6L181.5 262.8"/><path d="M6.7 226.9h13M13.2 220.9v12.5"/><path d="M22.4 226.9h13M28.9 220.9v12.5"/><path d="M37.6 226.9h13M44.1 220.9v12.5"/><path d="M53.3 226.9h13M59.8 220.9v12.5"/><path d="M68.7 226.9h13M75.2 220.9v12.5"/><path d="M84.4 226.9h13M90.9 220.9v12.5"/><path d="M100.4 226.9h13M106.9 220.9v12.5"/><path d="M115.5 237.2h13M122 231.2v12.5"/><path d="M131.3 226.9h13M137.8 220.9v12.5"/><path d="M147 226.9h13M153.5 220.9v12.5"/><path d="M162.1 226.9h13M168.6 220.9v12.5"/></g></svg>
<div class="t" style="left:903.6px;top:180.6px;color:#e01010;font-family:'Liberation Mono',monospace;font-size:9.4px;transform:scaleX(.86);transform-origin:0 0">NG</div>
<div class="t" style="left:903.6px;top:191.3px;color:#3cc4d0;font-family:'Liberation Mono',monospace;font-size:8.7px;letter-spacing:.35px">检测总数/合格数：<span style="font-family:'Liberation Sans',sans-serif;letter-spacing:.9px">7/0</span></div>
<div class="a" style="left:714.5px;top:423.5px;width:181.2px;height:12.2px;background:#1c1d1e"></div>
<div class="a" style="left:897.4px;top:423.5px;width:182px;height:12.2px;background:#1c1d1e"></div>
<div class="t" style="left:717.5px;top:424.5px;color:#595a5d;font-size:7.15px">Image Size: 514 x 409 Scale: 0.62</div>
<div class="t" style="left:900.5px;top:424.5px;color:#595a5d;font-size:7.15px">Image Size: 514 x 409 Scale: 0.62</div>
<div class="a" style="left:714px;top:435.7px;width:366px;height:146.6px;background:#212224"></div>
<div class="a" style="left:715px;top:436px;width:39.5px;height:21px;background:#3a3b3e"></div>
<div class="a" style="left:754.5px;top:436px;width:39.5px;height:21px;background:#2c2d2f"></div>
<div class="t" style="left:715px;top:441.5px;width:39.5px;text-align:center;color:#e8e8e8">配置</div>
<div class="t" style="left:754.5px;top:441.5px;width:39.5px;text-align:center;color:#8e8e8e">结果</div>
<div class="a" style="left:719.6px;top:463px;width:297px;height:70px;background:#212224"></div>
<div class="a" style="left:719.6px;top:462.8px;width:297px;height:21.7px;background:#1c1d1f"></div>
<div class="th" style="left:719.6px">序号</div>
<div class="th" style="left:779.5px">参数名称</div>
<div class="th" style="left:838.8px">类型</div>
<div class="th" style="left:897.7px">颜色</div>
<div class="th" style="left:956.7px">操作</div>
<div class="a" style="left:719.6px;top:484.8px;width:297px;height:15.4px;background:#2f3033"></div>
<div class="a" style="left:779.1px;top:484.5px;width:.8px;height:16px;background:#232426"></div>
<div class="a" style="left:838.4px;top:484.5px;width:.8px;height:16px;background:#232426"></div>
<div class="a" style="left:897.3px;top:484.5px;width:.8px;height:16px;background:#232426"></div>
<div class="a" style="left:956.3px;top:484.5px;width:.8px;height:16px;background:#232426"></div>
<div class="td" style="left:719.6px;top:484.5px;width:59px">0</div>
<div class="td" style="left:779.5px;top:484.5px;width:59px">inPoint2DfArray0</div>
<div class="td" style="left:838.8px;top:484.5px;width:59px">Point2DfArray</div>
<div class="a" style="left:898.1px;top:484.5px;width:58.6px;height:16.1px;background:#222325;border-bottom:.8px solid #38393c"></div>
<div class="a" style="left:957.1px;top:484.8px;width:59.5px;height:15.4px;background:#333437"></div>
<div class="a" style="left:898.4px;top:487px;width:11.6px;height:11.2px;background:#00f400"></div>
<div class="td" style="left:957.2px;top:484.5px;width:44px;padding-left:0;direction:rtl;text-align:right"><span style="direction:ltr;unicode-bidi:bidi-override">模块.outPoints</span></div>
<svg style="left:1002px;top:489.5px;width:11.6px;height:6px" viewBox="0 0 11.6 6" fill="none" stroke="#e0e0e0" stroke-width=".9"><path d="M4.6 .7H3a2.3 2.3 0 0 0 0 4.6h1.6M7 .7H8.6a2.3 2.3 0 0 1 0 4.6H7M3.4 3h4.8"/></svg>
<div class="a" style="left:719.6px;top:500.9px;width:297px;height:15.4px;background:#2f3033"></div>
<div class="a" style="left:779.1px;top:500.6px;width:.8px;height:16px;background:#232426"></div>
<div class="a" style="left:838.4px;top:500.6px;width:.8px;height:16px;background:#232426"></div>
<div class="a" style="left:897.3px;top:500.6px;width:.8px;height:16px;background:#232426"></div>
<div class="a" style="left:956.3px;top:500.6px;width:.8px;height:16px;background:#232426"></div>
<div class="td" style="left:719.6px;top:500.6px;width:59px">1</div>
<div class="td" style="left:779.5px;top:500.6px;width:59px">inLinePA1</div>
<div class="td" style="left:838.8px;top:500.6px;width:59px">LinePA</div>
<div class="a" style="left:898.1px;top:500.6px;width:58.6px;height:16.1px;background:#222325;border-bottom:.8px solid #38393c"></div>
<div class="a" style="left:957.1px;top:500.9px;width:59.5px;height:15.4px;background:#333437"></div>
<div class="a" style="left:898.4px;top:503.1px;width:11.6px;height:11.2px;background:#00f400"></div>
<div class="td" style="left:957.2px;top:500.6px;width:44px;padding-left:0;direction:rtl;text-align:right"><span style="direction:ltr;unicode-bidi:bidi-override">准边.输出直线</span></div>
<svg style="left:1002px;top:505.6px;width:11.6px;height:6px" viewBox="0 0 11.6 6" fill="none" stroke="#e0e0e0" stroke-width=".9"><path d="M4.6 .7H3a2.3 2.3 0 0 0 0 4.6h1.6M7 .7H8.6a2.3 2.3 0 0 1 0 4.6H7M3.4 3h4.8"/></svg>
<div class="a" style="left:719.6px;top:517px;width:297px;height:15.4px;background:#2f3033"></div>
<div class="a" style="left:779.1px;top:516.7px;width:.8px;height:16px;background:#232426"></div>
<div class="a" style="left:838.4px;top:516.7px;width:.8px;height:16px;background:#232426"></div>
<div class="a" style="left:897.3px;top:516.7px;width:.8px;height:16px;background:#232426"></div>
<div class="a" style="left:956.3px;top:516.7px;width:.8px;height:16px;background:#232426"></div>
<div class="td" style="left:719.6px;top:516.7px;width:59px">2</div>
<div class="td" style="left:779.5px;top:516.7px;width:59px">inBool2</div>
<div class="td" style="left:838.8px;top:516.7px;width:59px">Bool</div>
<div class="a" style="left:898.1px;top:516.7px;width:58.6px;height:16.1px;background:#222325;border-bottom:.8px solid #38393c"></div>
<div class="a" style="left:957.1px;top:517px;width:59.5px;height:15.4px;background:#333437"></div>
<div class="a" style="left:898.4px;top:519.2px;width:11.6px;height:11.2px;background:#00f400"></div>
<div class="td" style="left:957.2px;top:516.7px;width:44px;padding-left:0;direction:rtl;text-align:right"><span style="direction:ltr;unicode-bidi:bidi-override">out_InsResult</span></div>
<svg style="left:1002px;top:521.7px;width:11.6px;height:6px" viewBox="0 0 11.6 6" fill="none" stroke="#e0e0e0" stroke-width=".9"><path d="M4.6 .7H3a2.3 2.3 0 0 0 0 4.6h1.6M7 .7H8.6a2.3 2.3 0 0 1 0 4.6H7M3.4 3h4.8"/></svg>
<div class="a" style="left:1017.1px;top:462.7px;width:2.6px;height:53px;background:#4a4b4f;border-radius:1.3px"></div>
<div class="btn" style="top:468.3px">添加</div>
<div class="btn" style="top:492.1px">删除</div>
<div class="btn" style="top:516px">清除</div>
<div class="a" style="left:1071.3px;top:462.7px;width:2.6px;height:74px;background:#4a4b4f;border-radius:1.3px"></div>
<div class="t" style="left:719.6px;top:540px;color:#9a9a9a;line-height:14px;height:14px">图像输入：</div>
<div class="a" style="left:776.6px;top:539px;width:119.5px;height:14px;background:#333437"></div>
<div class="t" style="left:777.8px;top:540px;color:#c8c8c8;line-height:14px;height:14px">平滑滤波.输出图像</div>
<svg style="left:881.5px;top:543px;width:11.6px;height:6px" viewBox="0 0 11.6 6" fill="none" stroke="#e0e0e0" stroke-width=".9"><path d="M4.6 .7H3a2.3 2.3 0 0 0 0 4.6h1.6M7 .7H8.6a2.3 2.3 0 0 1 0 4.6H7M3.4 3h4.8"/></svg>
<div class="t" style="left:719.6px;top:562.3px;color:#9a9a9a;line-height:14px;height:14px">名称输入：</div>
<div class="a" style="left:776.6px;top:561.3px;width:119.5px;height:14px;background:#333437"></div>
<div class="t" style="left:777.8px;top:562.3px;color:#c8c8c8;line-height:14px;height:14px">图像名称.out_picName</div>
<svg style="left:881.5px;top:565.3px;width:11.6px;height:6px" viewBox="0 0 11.6 6" fill="none" stroke="#e0e0e0" stroke-width=".9"><path d="M4.6 .7H3a2.3 2.3 0 0 0 0 4.6h1.6M7 .7H8.6a2.3 2.3 0 0 1 0 4.6H7M3.4 3h4.8"/></svg>
<div class="a" style="left:0;top:582.1px;width:1080px;height:1.9px;background:#d6d6d6"></div>
<div class="a" style="left:1078.8px;top:0;width:1.2px;height:584px;background:#dcdcdc"></div>
<div class="a" style="left:1078.8px;top:11.5px;width:1.2px;height:7.5px;background:#2a6fc0"></div>
</div></body></html>
